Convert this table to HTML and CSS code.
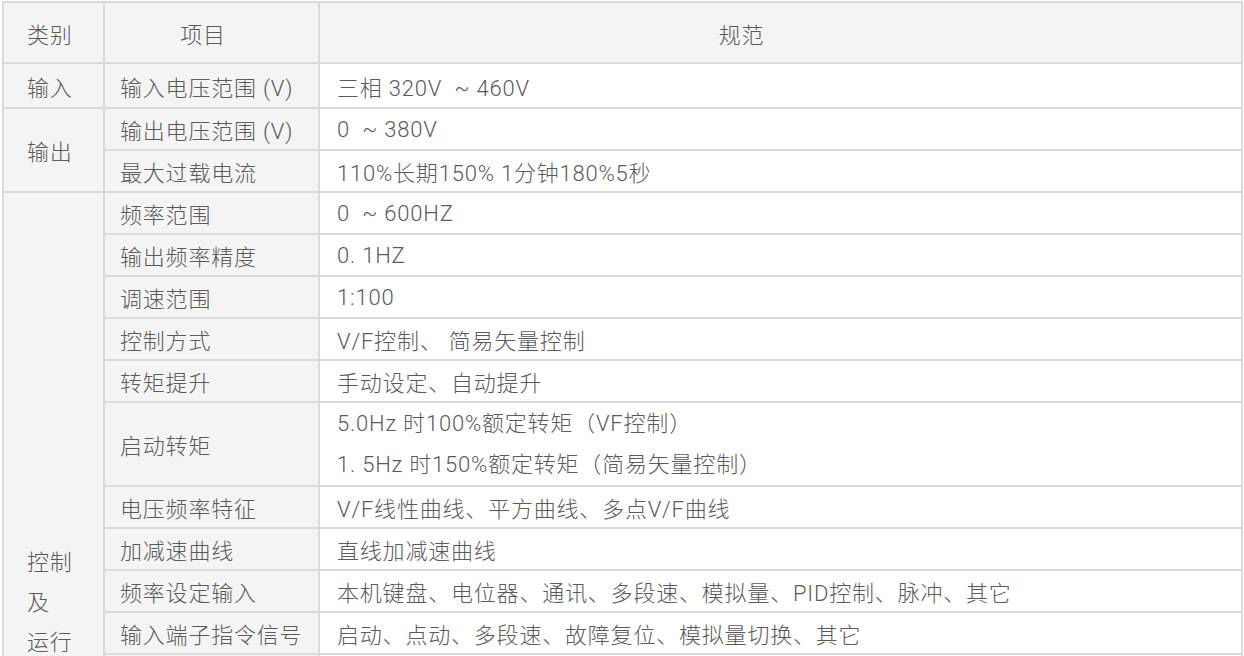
FILE: index.html
```html
<!DOCTYPE html>
<html lang="zh-CN">
<head>
<meta charset="utf-8">
<title>规格参数</title>
<link rel="stylesheet" href="styles.css">
</head>
<body>
<div class="wrap">
<table class="spec">
  <colgroup>
    <col class="c-cat">
    <col class="c-item">
    <col class="c-val">
  </colgroup>
  <thead>
    <tr>
      <th class="h-cat">类别</th>
      <th class="h-item">项目</th>
      <th class="h-val">规范</th>
    </tr>
  </thead>
  <tbody>
    <tr class="first">
      <td class="cat">输入</td>
      <td class="item">输入电压范围 (V)</td>
      <td class="val">三相 320V &nbsp;~ 460V</td>
    </tr>
    <tr>
      <td class="cat" rowspan="2">输出</td>
      <td class="item">输出电压范围 (V)</td>
      <td class="val">0 &nbsp;~ 380V</td>
    </tr>
    <tr>
      <td class="item">最大过载电流</td>
      <td class="val">110%长期150% 1分钟180%5秒</td>
    </tr>
    <tr>
      <td class="cat cat-multi" rowspan="11"><div>控制</div><div>及</div><div>运行</div></td>
      <td class="item">频率范围</td>
      <td class="val">0 &nbsp;~ 600HZ</td>
    </tr>
    <tr>
      <td class="item">输出频率精度</td>
      <td class="val">0. 1HZ</td>
    </tr>
    <tr>
      <td class="item">调速范围</td>
      <td class="val">1:100</td>
    </tr>
    <tr>
      <td class="item">控制方式</td>
      <td class="val">V/F控制、 简易矢量控制</td>
    </tr>
    <tr>
      <td class="item">转矩提升</td>
      <td class="val">手动设定、自动提升</td>
    </tr>
    <tr class="double">
      <td class="item">启动转矩</td>
      <td class="val"><div class="line">5.0Hz 时100%额定转矩（VF控制）</div><div class="line">1. 5Hz 时150%额定转矩（简易矢量控制）</div></td>
    </tr>
    <tr>
      <td class="item">电压频率特征</td>
      <td class="val">V/F线性曲线、平方曲线、多点V/F曲线</td>
    </tr>
    <tr>
      <td class="item">加减速曲线</td>
      <td class="val">直线加减速曲线</td>
    </tr>
    <tr>
      <td class="item">频率设定输入</td>
      <td class="val">本机键盘、电位器、通讯、多段速、模拟量、PID控制、脉冲、其它</td>
    </tr>
    <tr>
      <td class="item">输入端子指令信号</td>
      <td class="val">启动、点动、多段速、故障复位、模拟量切换、其它</td>
    </tr>
    <tr class="more">
      <td class="item"></td>
      <td class="val"></td>
    </tr>
  </tbody>
</table>
</div>
</body>
</html>
```
FILE: styles.css
```css
html, body {
  margin: 0;
  padding: 0;
  background: #ffffff;
}

.wrap {
  padding: 1px 1px 0 2px;
}

.spec {
  width: 100%;
  border-collapse: collapse;
  table-layout: fixed;
  font-family: Roboto, "Noto Sans CJK SC", sans-serif;
  font-weight: 300;
  font-size: 22px;
  color: #5a5a5a;
  letter-spacing: 0.8px;
}

.c-cat { width: 101px; }
.c-item { width: 215px; }
.c-val { width: auto; }

.spec th,
.spec td {
  border: 2px solid #dadada;
  height: 42px;
  padding: 0;
  vertical-align: middle;
  font-weight: 300;
  box-sizing: border-box;
}

.spec thead th {
  height: 61px;
  background: #f4f4f4;
}

.h-cat {
  text-align: left;
  padding-left: 23px !important;
}

.h-item {
  text-align: center;
  padding-right: 17px !important;
}

.h-val {
  text-align: center;
  padding-right: 78px !important;
}

.cat {
  background: #f4f4f4;
  padding-left: 23px !important;
  text-align: left;
}

.cat-multi {
  vertical-align: top !important;
  padding-top: 350px !important;
  line-height: 40px;
}

.item {
  background: #f4f4f4;
  padding-left: 15px !important;
  text-align: left;
}

.val {
  background: #ffffff;
  padding-left: 17px !important;
  text-align: left;
}

.first td {
  height: 45px;
}

.double td {
  height: 83px;
}

.line {
  line-height: 41px;
}

.more td {
  height: 60px;
}
```
